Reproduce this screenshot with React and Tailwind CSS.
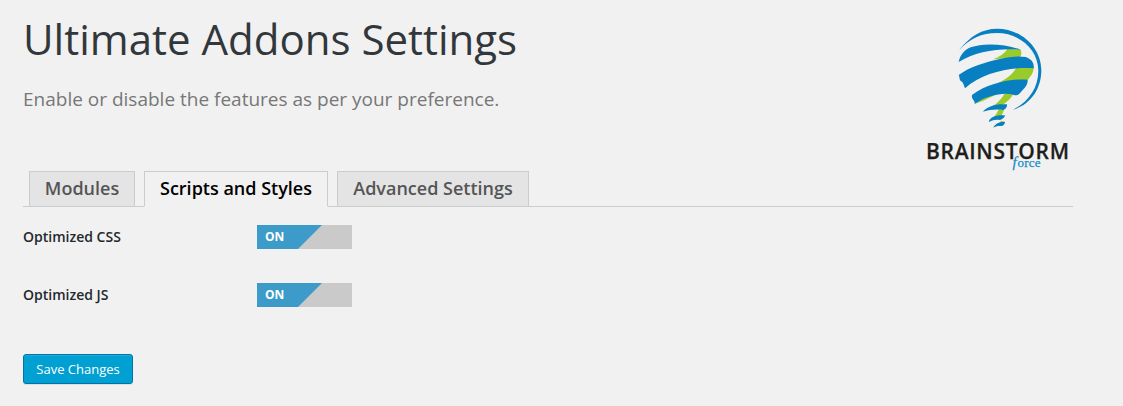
const tabs = [
  { label: "Modules", size: "w-[106px]" },
  { label: "Scripts and Styles", size: "w-[184px]", active: true },
  { label: "Advanced Settings", size: "w-[192px]" },
];

function Logo() {
  return (
    <div className="flex w-[150px] flex-col">
      <svg viewBox="0 0 360 345" className="ml-[17px] h-[115px] w-[120px]" aria-hidden="true">
        <g fill="#99cb2b">
          <path d="M159 118C180 110 193 101 202 87L240 88C246 94 245 103 240 112Z" />
          <path d="M170 191C198 179 218 163 230 142L281 142C281 157 274 168 262 181Z" />
          <path d="M105 251C126 234 148 225 174 221L128 243Z" />
          <path d="M124 275C158 262 180 247 194 220L221 220C213 236 201 246 188 254L150 262Z" />
          <path d="M148 302C162 293 171 281 176 268L192 268C190 277 187 284 182 290Z" />
          <path d="M164 321C174 315 180 307 183 302L195 305C191 311 187 314 184 315Z" />
        </g>
        <g fill="#087fc0">
          <path d="M56 92C90 48 127 26 171 26C244 26 304 83 304 151C304 212 266 257 219 269C263 247 295 206 295 152C295 89 239 39 171 39C125 39 89 55 56 92Z" />
          <path d="M56 126C61 104 74 89 92 82C128 68 197 71 242 89C173 84 107 95 56 126Z" />
          <path d="M56 165C88 141 135 127 179 117C208 110 235 107 257 111C275 117 283 129 281 145C213 140 130 157 75 205C70 192 70 187 62 183C57 178 60 172 56 165Z" />
          <path d="M96 225C139 193 205 175 263 179C264 190 259 200 246 212C238 222 231 230 220 224C189 216 139 227 104 252C106 240 93 239 96 225Z" />
          <path d="M129 275C142 258 171 250 201 253C202 260 198 267 190 270C169 267 150 269 129 275Z" />
          <path d="M147 306C147 292 169 284 195 286C194 293 187 299 180 300C168 298 158 300 147 306Z" />
          <path d="M160 323C165 310 180 305 195 306C194 315 188 319 181 318C172 317 166 319 160 323Z" />
        </g>
      </svg>
      <svg viewBox="0 0 150 40" className="h-10 w-[150px]">
        <text x="3" y="24" textLength="143" lengthAdjust="spacing" fill="#211d1a" stroke="#211d1a" strokeWidth="0.25" className="font-['Open_Sans',sans-serif] text-[21px] font-semibold">BRAINSTORM</text>
        <text x="89.5" y="32" fill="#168bc8" stroke="#168bc8" strokeWidth="0.25" className="font-['Liberation_Serif',serif]">
          <tspan className="text-[15px] italic">f</tspan>
          <tspan x="94.5" className="text-[13px] tracking-[0.2px]">orce</tspan>
        </text>
      </svg>
    </div>
  );
}

function Setting({ label }) {
  return (
    <div className="flex h-6 items-center">
      <span className="w-[234px] pb-0.5 text-[14px] font-semibold text-[#23282d]">{label}</span>
      <button role="switch" aria-checked="true" aria-label={label} className="flex h-6 w-[95px] items-center bg-[#cacaca] p-0">
        <span className="flex h-6 w-full items-center bg-[#3d9bc9] [clip-path:polygon(0_0,65px_0,41px_24px,0_24px)]">
          <span className="pl-2 text-[12px] font-bold text-white">ON</span>
        </span>
      </button>
    </div>
  );
}

export default function App() {
  return (
    <main className="h-[406px] w-[1123px] overflow-hidden bg-[#f1f1f1] pl-[23px] font-['Open_Sans',sans-serif]">
      <div className="w-[1050px]">
        <header className="flex h-[171px] justify-between">
          <div className="pt-3.5">
            <h1 className="text-[42px] leading-[50px] font-normal whitespace-nowrap text-[#32373c]">Ultimate Addons Settings</h1>
            <p className="mt-[19px] text-[19px] leading-8 text-[#777777]">Enable or disable the features as per your preference.</p>
          </div>
          <div className="pt-5"><Logo /></div>
        </header>
        <nav className="flex h-9 gap-[9px] border-b border-[#cccccc] pl-1.5">
          {tabs.map((tab) => (
            <a key={tab.label} className={`${tab.size} ${tab.active ? "border-b-[#f1f1f1] bg-[#f1f1f1] text-black" : "border-b-[#cccccc] bg-[#e4e4e4] text-[#555555]"} flex h-9 shrink-0 items-center justify-center border border-x-[#cccccc] border-t-[#cccccc] pb-0.5 text-[18px] font-semibold whitespace-nowrap`}>{tab.label}</a>
          ))}
        </nav>
        <section className="flex flex-col gap-[34px] pt-[18px]">
          <Setting label="Optimized CSS" />
          <Setting label="Optimized JS" />
        </section>
        <button className="mt-[47px] h-[30px] w-[110px] rounded-[3px] border border-[#0073aa] bg-[#00a0d2] text-[13px] leading-7 text-white shadow-[inset_0_1px_0_rgba(120,200,230,0.3),0_1px_0_rgba(0,0,0,0.08)]">Save Changes</button>
      </div>
    </main>
  );
}
